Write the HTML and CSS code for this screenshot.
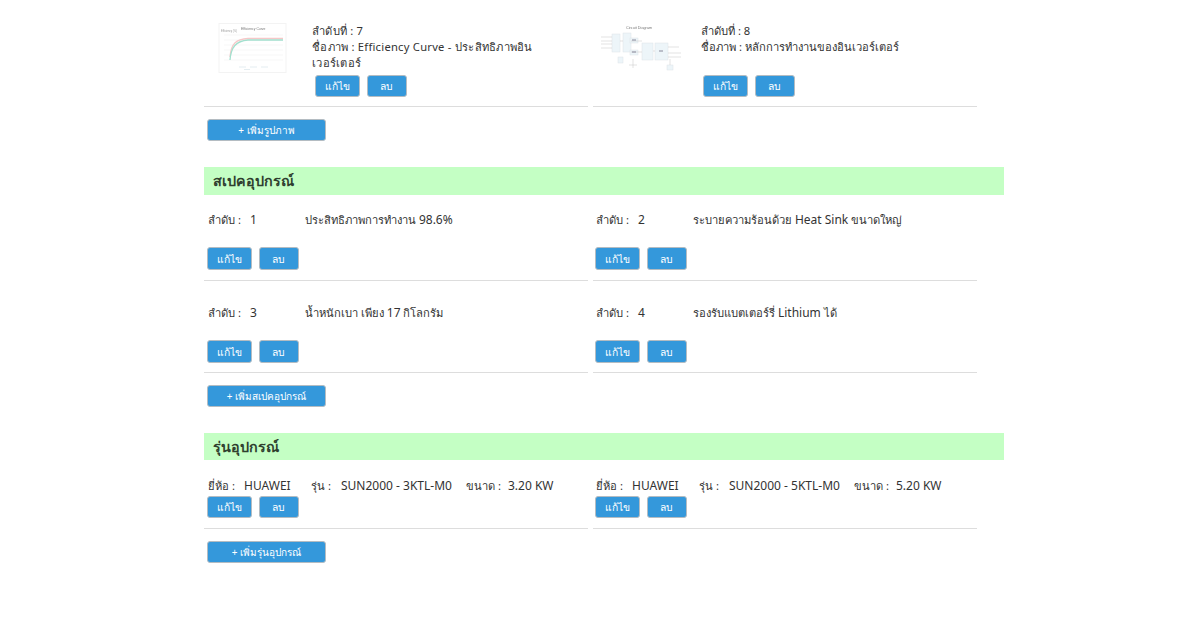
FILE: index.html
```html
<!DOCTYPE html>
<html lang="th">
<head>
<meta charset="utf-8">
<title>อุปกรณ์</title>
<link rel="stylesheet" href="styles.css">
</head>
<body>
<main class="page">
  <div class="grid pics">
    <article class="item pic">
      <div class="thumb">
        <svg width="100" height="54" viewBox="0 0 100 54">
          <rect x="15" y="0.5" width="67" height="49" fill="#fff" stroke="#f3f3f3"/>
          <text x="37" y="7" font-size="3.4" fill="#777" font-family="Liberation Sans">Efficiency Curve</text>
          <text x="17" y="9" font-size="2.6" fill="#999" font-family="Liberation Sans">Efficiency (%)</text>
          <path d="M20 12H79M20 17H79M20 22H79M20 27H79M20 32H79M20 37H79" stroke="#eee" stroke-width=".5" fill="none"/>
          <path d="M26 34C27 21 32 16 44 15.5H79" stroke="#f5c8c8" stroke-width="1.3" fill="none"/>
          <path d="M26 37C27 24 32 18 44 17H79" stroke="#a2e0ce" stroke-width="1.3" fill="none"/>
          <path d="M35 44H42M46 44H53M57 44H64M40 46.5H46" stroke="#dde8ee" stroke-width=".8" fill="none"/>
        </svg>
      </div>
      <div class="info">
        <div class="info-text">
          <div>ลำดับที่ : 7</div>
          <div>ชื่อภาพ : Efficiency Curve - ประสิทธิภาพอินเวอร์เตอร์</div>
        </div>
        <div class="actions"><button class="btn edit">แก้ไข</button><button class="btn del">ลบ</button></div>
      </div>
    </article>
    <article class="item pic">
      <div class="thumb">
        <svg width="100" height="54" viewBox="0 0 100 54">
          <text x="33" y="6" font-size="3.8" fill="#777" font-family="Liberation Sans">Circuit Diagram</text>
          <g fill="#edf5f9" stroke="#dde4e8" stroke-width=".5">
            <rect x="19" y="11" width="8" height="18"/><rect x="30" y="10" width="8" height="19"/>
            <rect x="37" y="15" width="8" height="5"/><rect x="37" y="27" width="8" height="5"/>
            <rect x="49" y="20" width="11" height="17"/><rect x="62" y="20" width="13" height="17"/>
            <rect x="25" y="34" width="5" height="6"/><rect x="74" y="42" width="6" height="5"/>
          </g>
          <path d="M8 14H19M8 18H19M8 21H19M8 25H19M27 18H30M38 18H49M38 29H49M60 28H62M75 24H86M75 30H88M75 34H88M40 36V45M36 42H44M77 36V42" stroke="#c4c4c4" stroke-width=".5" fill="none"/>
          <path d="M39 17H43M39 29H43M66 28H70" stroke="#889" stroke-width="1.2" fill="none"/>
        </svg>
      </div>
      <div class="info">
        <div class="info-text">
          <div>ลำดับที่ : 8</div>
          <div>ชื่อภาพ : หลักการทำงานของอินเวอร์เตอร์</div>
        </div>
        <div class="actions"><button class="btn edit">แก้ไข</button><button class="btn del">ลบ</button></div>
      </div>
    </article>
  </div>
  <div class="add-wrap first"><button class="btn add">+ เพิ่มรูปภาพ</button></div>

  <h2 class="section">สเปคอุปกรณ์</h2>
  <div class="grid specs">
    <article class="item spec">
      <div class="line"><span class="no"><span class="no-label">ลำดับ :</span><span class="lat">1</span></span><span>ประสิทธิภาพการทำงาน <span class="lat">98.6%</span></span></div>
      <div class="actions"><button class="btn edit">แก้ไข</button><button class="btn del">ลบ</button></div>
    </article>
    <article class="item spec">
      <div class="line"><span class="no"><span class="no-label">ลำดับ :</span><span class="lat">2</span></span><span>ระบายความร้อนด้วย <span class="lat">Heat Sink</span> ขนาดใหญ่</span></div>
      <div class="actions"><button class="btn edit">แก้ไข</button><button class="btn del">ลบ</button></div>
    </article>
    <article class="item spec">
      <div class="line"><span class="no"><span class="no-label">ลำดับ :</span><span class="lat">3</span></span><span>น้ำหนักเบา เพียง <span class="lat">17</span> กิโลกรัม</span></div>
      <div class="actions"><button class="btn edit">แก้ไข</button><button class="btn del">ลบ</button></div>
    </article>
    <article class="item spec">
      <div class="line"><span class="no"><span class="no-label">ลำดับ :</span><span class="lat">4</span></span><span>รองรับแบตเตอร์รี่ <span class="lat">Lithium</span> ได้</span></div>
      <div class="actions"><button class="btn edit">แก้ไข</button><button class="btn del">ลบ</button></div>
    </article>
  </div>
  <div class="add-wrap"><button class="btn add">+ เพิ่มสเปคอุปกรณ์</button></div>

  <h2 class="section short">รุ่นอุปกรณ์</h2>
  <div class="grid models">
    <article class="item model">
      <div class="line">
        <span class="brand"><span class="brand-label">ยี่ห้อ :</span><span class="lat">HUAWEI</span></span>
        <span class="model-name"><span class="model-label">รุ่น :</span><span class="lat">SUN2000 - 3KTL-M0</span></span>
        <span><span class="size-label">ขนาด :</span><span class="lat">3.20 KW</span></span>
      </div>
      <div class="actions"><button class="btn edit">แก้ไข</button><button class="btn del">ลบ</button></div>
    </article>
    <article class="item model">
      <div class="line">
        <span class="brand"><span class="brand-label">ยี่ห้อ :</span><span class="lat">HUAWEI</span></span>
        <span class="model-name"><span class="model-label">รุ่น :</span><span class="lat">SUN2000 - 5KTL-M0</span></span>
        <span><span class="size-label">ขนาด :</span><span class="lat">5.20 KW</span></span>
      </div>
      <div class="actions"><button class="btn edit">แก้ไข</button><button class="btn del">ลบ</button></div>
    </article>
  </div>
  <div class="add-wrap"><button class="btn add">+ เพิ่มรุ่นอุปกรณ์</button></div>
</main>
</body>
</html>
```
FILE: styles.css
```css
* { box-sizing: border-box; }
html, body { margin: 0; padding: 0; background: #fff; }
body {
  font-family: "Noto Sans", "Open Sans", sans-serif;
  font-size: 11.2px;
  line-height: 16px;
  color: #333;
}
.lat { font-size: 12px; }
.page { width: 800px; margin-left: 204px; padding-top: 23px; }
.grid { display: grid; grid-template-columns: 384px 384px; column-gap: 5px; }
.item { border-bottom: 1px solid #ddd; }

.pic { height: 84px; display: flex; }
.thumb { width: 108px; height: 54px; flex: none; }
.thumb svg { display: block; filter: blur(.7px); }
.info { width: 232px; }
.info-text { height: 51.5px; letter-spacing: .25px; }
.pic:nth-child(even) .info-text { letter-spacing: 0; }

.actions { display: flex; gap: 7.5px; padding-left: 2px; }
.pic .actions { padding-left: 3px; }
.model .actions { padding-left: 3px; }
.item:nth-child(even) .actions { margin-left: -1px; }
.btn {
  font: inherit;
  font-size: 10.3px;
  line-height: 16px;
  color: #fff;
  background: #3498db;
  border: 1px solid #b4bcc2;
  border-radius: 3px;
  height: 23px;
  padding: 0;
  text-align: center;
}
.pic .btn { height: 22.5px; }
.edit { width: 44.5px; }
.del { width: 39.5px; }

.add-wrap { padding: 12px 0 0 3px; }
.add { display: block; width: 119px; height: 22px; font-size: 10px; }

.section {
  margin: 26px 0 0;
  height: 28px;
  padding-left: 9px;
  background: #c4ffc4;
  color: #2f3f2f;
  font-size: 14.3px;
  font-weight: 600;
  line-height: 28px;
}
.section.short { height: 27px; line-height: 27px; }

.spec { height: 86px; padding: 17px 0 0 1px; }
.spec:nth-child(n+3) { height: 92px; padding-top: 24px; }
.spec .line { display: flex; height: 35px; padding-left: 3px; }
.no { width: 97px; flex: none; }
.no-label { display: inline-block; width: 42px; }

.models { padding-top: 18px; }
.model { height: 51px; }
.model .btn { height: 22px; }
.model .line { display: flex; padding-left: 4px; height: 18px; }
.spec:nth-child(even) .line, .model:nth-child(even) .line { margin-left: -1px; }
.brand { width: 103px; flex: none; }
.brand-label { display: inline-block; width: 36px; }
.model-name { width: 155px; flex: none; }
.model-label { display: inline-block; width: 30px; }
.size-label { display: inline-block; width: 42px; }
```
